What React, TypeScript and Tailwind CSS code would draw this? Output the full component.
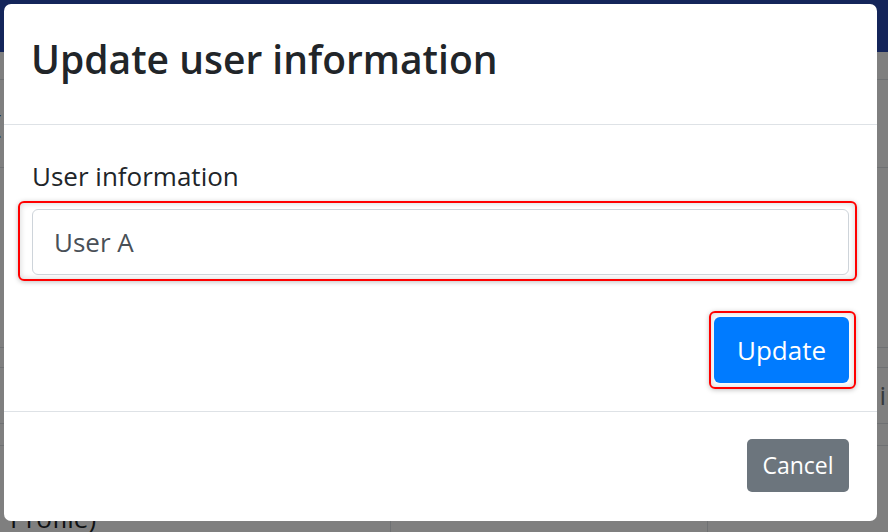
import React from 'react';

const font = { fontFamily: '"Open Sans", "Noto Sans", sans-serif' };

function BackgroundPage() {
  return (
    <div className="w-full h-[532px] bg-white overflow-hidden">
      <div className="h-[52px] bg-[#284ab4]" />
      <div className="h-[28px] border-b border-[#dee2e6]" />
      <div className="h-[88px] border-b border-[#dee2e6] flex items-center">
        <span className="text-[26px] text-[#212529] -ml-[6px]">(</span>
      </div>
      <div className="h-[180px] border-b border-[#dee2e6]" />
      <div className="h-[20px] border-b border-[#dee2e6]" />
      <div className="h-[56px] border-b border-[#dee2e6] flex items-center justify-end">
        <span className="text-[26px] text-[#6c757d] -mr-[14px]">in</span>
      </div>
      <div className="h-[22px] border-b border-[#dee2e6]" />
      <div className="grid grid-cols-[391px_317px_1fr] h-[100px]">
        <div className="border-r border-[#dee2e6] pl-[10px] pt-[56px] text-[26px] leading-[32px] text-[#212529]">
          Profile)
        </div>
        <div className="border-r border-[#dee2e6]" />
        <div />
      </div>
    </div>
  );
}

function Highlight({ className }: { className: string }) {
  return (
    <div
      className={
        'absolute pointer-events-none rounded-[6px] border-2 border-[#ff0000] shadow-[inset_0_0_6px_rgba(0,0,0,0.18),0_1px_5px_rgba(0,0,0,0.25)] ' +
        className
      }
    />
  );
}

export default function App() {
  return (
    <div className="relative w-[888px] h-[532px] overflow-hidden" style={font}>
      <BackgroundPage />

      {/* modal backdrop */}
      <div className="absolute inset-0 bg-black/50 pt-[4px] pl-[4px]">
        <div className="w-[873px] h-[517px] bg-white rounded-[7px] flex flex-col">
          <div className="h-[121px] shrink-0 border-b border-[#dee2e6] pl-[27px] pt-[31px]">
            <h5 className="text-[39px] leading-[48px] font-semibold text-[#212529]">
              Update user information
            </h5>
          </div>

          <div className="px-[28px] pt-[30px] pb-[28px] border-b border-[#dee2e6]">
            <label className="block text-[26px] leading-[42px] text-[#212529] mb-[12px]">
              User information
            </label>
            <div className="relative">
              <Highlight className="-left-[14px] -right-[8px] -top-[8px] -bottom-[6px]" />
              <input
                readOnly
                value="User A"
                className="relative block w-full h-[66px] rounded-[6px] border border-[#ced4da] bg-white px-[21px] text-[26px] text-[#495057] outline-none"
              />
            </div>
            <div className="flex justify-end mt-[42px]">
              <div className="relative">
                <Highlight className="-left-[5px] -right-[7px] -top-[6px] -bottom-[6px]" />
                <button className="relative w-[135px] h-[66px] rounded-[6px] bg-[#007bff] text-white text-[26px]">
                  Update
                </button>
              </div>
            </div>
          </div>

          <div className="flex-1 flex justify-end items-start pt-[27px] pr-[28px]">
            <button className="w-[102px] h-[53px] rounded-[5px] bg-[#6c757d] text-white text-[23px]">
              Cancel
            </button>
          </div>
        </div>
      </div>
    </div>
  );
}
